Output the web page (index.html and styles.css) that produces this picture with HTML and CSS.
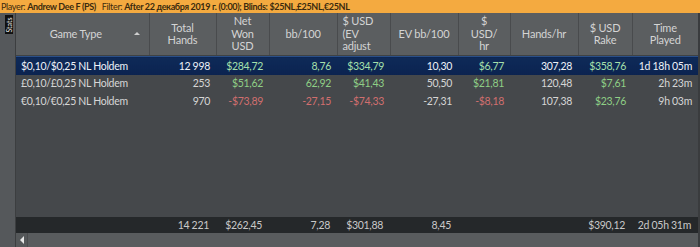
FILE: index.html
```html
<!doctype html>
<html lang="en">
  <head>
    <meta charset="utf-8">
    <title>Stats</title>
    <link rel="stylesheet" href="styles.css">
  </head>
  <body>
    <div class="filterbar">
      Player: <b>Andrew Dee F (PS)</b>&nbsp;&nbsp; Filter: <b>After 22 декабря 2019 г. (0:00); Blinds: $25NL,£25NL,€25NL</b>
    </div>
    <div class="main">
      <div class="side">
        <div class="tab"><span>Stats</span></div>
      </div>
      <div class="panel">
        <table class="grid head">
          <colgroup>
            <col class="c1"><col class="c2"><col class="c3"><col class="c4"><col class="c5">
            <col class="c6"><col class="c7"><col class="c8"><col class="c9"><col class="c10">
          </colgroup>
          <tr>
            <th class="sorted">Game Type<span class="arrow"></span></th>
            <th>Total<br>Hands</th>
            <th>Net<br>Won<br>USD</th>
            <th>bb/100</th>
            <th class="clip">$ USD<br>(EV<br>adjust</th>
            <th>EV bb/100</th>
            <th>$<br>USD/<br>hr</th>
            <th>Hands/hr</th>
            <th>$ USD<br>Rake</th>
            <th>Time<br>Played</th>
          </tr>
        </table>
        <div class="body">
          <table class="grid rows">
            <colgroup>
              <col class="c1"><col class="c2"><col class="c3"><col class="c4"><col class="c5">
              <col class="c6"><col class="c7"><col class="c8"><col class="c9"><col class="c10">
            </colgroup>
            <tr class="selected">
              <td class="name">$0,10/$0,25 NL Holdem</td>
              <td>12 998</td>
              <td class="pos">$284,72</td>
              <td class="pos">8,76</td>
              <td class="pos">$334,79</td>
              <td>10,30</td>
              <td class="pos">$6,77</td>
              <td>307,28</td>
              <td class="pos">$358,76</td>
              <td>1d 18h 05m</td>
            </tr>
            <tr>
              <td class="name">£0,10/£0,25 NL Holdem</td>
              <td>253</td>
              <td class="pos">$51,62</td>
              <td class="pos">62,92</td>
              <td class="pos">$41,43</td>
              <td>50,50</td>
              <td class="pos">$21,81</td>
              <td>120,48</td>
              <td class="pos">$7,61</td>
              <td>2h 23m</td>
            </tr>
            <tr>
              <td class="name">€0,10/€0,25 NL Holdem</td>
              <td>970</td>
              <td class="neg">-$73,89</td>
              <td class="neg">-27,15</td>
              <td class="neg">-$74,33</td>
              <td>-27,31</td>
              <td class="neg">-$8,18</td>
              <td>107,38</td>
              <td class="pos">$23,76</td>
              <td>9h 03m</td>
            </tr>
          </table>
        </div>
        <table class="grid totals">
          <colgroup>
            <col class="c1"><col class="c2"><col class="c3"><col class="c4"><col class="c5">
            <col class="c6"><col class="c7"><col class="c8"><col class="c9"><col class="c10">
          </colgroup>
          <tr>
            <td></td>
            <td>14 221</td>
            <td>$262,45</td>
            <td>7,28</td>
            <td>$301,88</td>
            <td>8,45</td>
            <td></td>
            <td></td>
            <td>$390,12</td>
            <td>2d 05h 31m</td>
          </tr>
        </table>
        <div class="scrollbar">
          <div class="scroll-left"><span class="tri"></span></div>
          <div class="scroll-track"></div>
        </div>
      </div>
    </div>
  </body>
</html>
```
FILE: styles.css
```css
html, body {
  margin: 0;
  padding: 0;
}
body {
  width: 700px;
  height: 247px;
  overflow: hidden;
  background-color: #45484b;
  font-family: Lato, "Open Sans", sans-serif;
  font-size: 10.5px;
  letter-spacing: -0.3px;
  color: #d6d6d6;
  display: flex;
  flex-direction: column;
}
.filterbar {
  height: 13px;
  line-height: 13px;
  background-color: #f4aa40;
  color: #3b2a0e;
  font-size: 9px;
  letter-spacing: -0.35px;
  padding-left: 1px;
  white-space: nowrap;
  overflow: hidden;
}
.filterbar b {
  font-weight: bold;
}
.main {
  flex: 1;
  display: flex;
  min-height: 0;
}
.side {
  width: 15px;
  background-color: #55585b;
  border-right: 1px solid #3c3e40;
  padding-top: 2px;
}
.tab {
  width: 8px;
  height: 19px;
  margin-left: 5px;
  background-color: #111;
  color: #e8e8e8;
  font-size: 7px;
  letter-spacing: 0;
  display: flex;
  align-items: center;
  justify-content: center;
}
.tab span {
  display: block;
  transform: rotate(-90deg);
  white-space: nowrap;
}
.panel {
  flex: 1;
  display: flex;
  flex-direction: column;
  border-right: 2px solid #3a3c3e;
  min-width: 0;
}
.grid {
  width: 682px;
  table-layout: fixed;
  border-collapse: collapse;
}
.c1 { width: 133px; }
.c2 { width: 67px; }
.c3 { width: 53px; }
.c4 { width: 68px; }
.c5 { width: 53px; }
.c6 { width: 68px; }
.c7 { width: 52px; }
.c8 { width: 68px; }
.c9 { width: 54px; }
.c10 { width: 66px; }
.head th {
  height: 42px;
  padding: 0 3px;
  background-color: #5b5e60;
  border-right: 1px solid #494b4d;
  border-bottom: 1px solid #3f4244;
  font-weight: normal;
  font-size: 11px;
  letter-spacing: -0.2px;
  line-height: 12.5px;
  color: #d4d4d4;
  text-align: center;
  overflow: hidden;
}
.head th:last-child {
  border-right: none;
}
.head th.sorted {
  position: relative;
  padding-right: 16px;
}
.arrow {
  position: absolute;
  right: 9px;
  top: 19px;
  border-left: 3px solid transparent;
  border-right: 3px solid transparent;
  border-bottom: 3px solid #cfcfcf;
}
.head th.clip {
  text-align: left;
  padding-left: 5px;
  white-space: nowrap;
}
.body {
  flex: 1;
  min-height: 0;
}
.rows td {
  height: 17.5px;
  padding: 0 6px 0 0;
  text-align: right;
  white-space: nowrap;
  overflow: hidden;
}
.rows td.name {
  text-align: left;
  padding-left: 5px;
}
.rows tr.selected td {
  background: linear-gradient(#0e2a58, #0b2350);
  color: #eef2f8;
  border-top: 1px solid #2a4f88;
}
.pos {
  color: #8fcf86;
}
.neg {
  color: #d16f6f;
}
.rows tr.selected td.pos {
  color: #a6e0ac;
}
.totals td {
  height: 16px;
  padding: 0 7px 0 0;
  background-color: #25282a;
  color: #c9c9c9;
  text-align: right;
  white-space: nowrap;
}
.scrollbar {
  height: 14px;
  display: flex;
  background-color: #55585a;
}
.scroll-left {
  width: 11px;
  display: flex;
  align-items: center;
  justify-content: center;
  border-right: 1px solid #4a4c4e;
}
.tri {
  border-top: 4px solid transparent;
  border-bottom: 4px solid transparent;
  border-right: 4px solid #e6e6e6;
}
.scroll-track {
  flex: 1;
  background-color: #595c5e;
}
```
